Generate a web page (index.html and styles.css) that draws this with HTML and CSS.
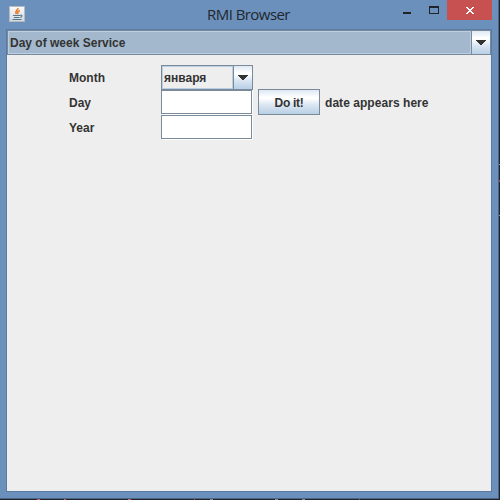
FILE: index.html
```html
<!DOCTYPE html>
<html lang="en">
<head>
<meta charset="utf-8">
<title>RMI Browser</title>
<link rel="stylesheet" href="styles.css">
</head>
<body>
<div class="desktop">
  <div class="window">
    <header class="titlebar">
      <svg class="app-icon" width="16" height="16" viewBox="0 0 16 16">
        <defs><linearGradient id="tile" x1="0" y1="0" x2="0" y2="1"><stop offset="0" stop-color="#fafafa"/><stop offset="1" stop-color="#d3d8dc"/></linearGradient></defs>
        <rect x=".5" y=".5" width="15" height="15" fill="url(#tile)" stroke="#b3bcc5"/>
        <path d="M9 2C9.5 4 5.2 4.8 7.4 8.2M10.8 4.5C8.2 5.7 8.3 6.6 9.3 8.2" fill="none" stroke="#e87a26" stroke-width="1.5"/>
        <path d="M4 9.5h7M5 11.5h5.5M3.5 13.5h9M11 9.3c2.8-.6 2.5 1.8.2 2.2" fill="none" stroke="#4f7890" stroke-width="1.1"/>
      </svg>
      <h1 class="title">RMI Browser</h1>
      <div class="controls">
        <svg width="52" height="20" viewBox="0 0 52 20">
          <path d="M8 12h8v2H8z" fill="#202429"/>
          <path d="M34 6h10v8H34zM35 8v5h8V8z" fill="#202429" fill-rule="evenodd"/>
        </svg>
        <svg class="close" width="45" height="20" viewBox="0 0 45 20" shape-rendering="crispEdges">
          <path d="M19 7h2v1h1v1h2V8h1V7h2v1h-1v1h-1v1h-1v1h1v1h1v1h1v1h-2v-1h-1v-1h-2v1h-1v1h-2v-1h1v-1h1v-1h1v-1h-1V9h-1V8h-1z" fill="#fff"/>
        </svg>
      </div>
    </header>
    <main class="client">
      <div class="combo service">
        <div class="value">Day of week Service</div>
        <div class="arrow"><svg width="10" height="5" viewBox="0 0 10 5"><path d="M0 0h10v1H9v1H8v1H7v1H6v1H4V4H3V3H2V2H1V1H0z" fill="#333"/></svg></div>
      </div>
      <div class="form">
        <label class="month-label">Month</label>
        <div class="combo month">
          <div class="value">января</div>
          <div class="arrow"><svg width="10" height="5" viewBox="0 0 10 5"><path d="M0 0h10v1H9v1H8v1H7v1H6v1H4V4H3V3H2V2H1V1H0z" fill="#333"/></svg></div>
        </div>
        <label class="day-label">Day</label>
        <div class="field day"></div>
        <div class="action"><button>Do it!</button><span>date appears here</span></div>
        <label class="year-label">Year</label>
        <div class="field year"></div>
      </div>
    </main>
  </div>
</div>
</body>
</html>
```
FILE: styles.css
```css
* { box-sizing: border-box; }
body { margin: 0; font: bold 12px/16px "Liberation Sans", Arial, sans-serif; color: #333; }
.desktop {
  width: 500px; height: 500px; overflow: hidden;
  background:
    linear-gradient(#c45b60, #c45b60) 37px 499px / 3px 1px no-repeat,
    linear-gradient(#c45b60, #c45b60) 64px 499px / 2px 1px no-repeat,
    linear-gradient(#c45b60, #c45b60) 128px 499px / 3px 1px no-repeat,
    linear-gradient(#a04a50, #a04a50) 194px 499px / 1px 1px no-repeat,
    linear-gradient(#85888e, #85888e) 210px 499px / 3px 1px no-repeat,
    linear-gradient(#85888e, #85888e) 275px 499px / 3px 1px no-repeat,
    linear-gradient(#85888e, #85888e) 302px 499px / 3px 1px no-repeat,
    linear-gradient(#7a5c60, #7a5c60) 359px 499px / 1px 1px no-repeat,
    linear-gradient(#6fa0c4, #6fa0c4) 499px 164px / 1px 1px no-repeat,
    linear-gradient(#a04a50, #a04a50) 499px 180px / 1px 2px no-repeat,
    linear-gradient(#6fa0c4, #6fa0c4) 499px 215px / 1px 1px no-repeat,
    #20232d;
}
.window {
  width: 499px; height: 499px; padding: 0 6px 6px;
  background: #6b90bc; border-right: 1px solid #4b6585; border-bottom: 1px solid #4b6585;
}
.titlebar { height: 29px; display: grid; grid-template-columns: 195px 1fr 97px; align-items: start; }
.app-icon { margin: 6px 0 0 3px; }
.title {
  margin: 4px 0 0 6px; font: 400 15px/20px "Open Sans", "Noto Sans", sans-serif;
  letter-spacing: -.55px; color: #22272e; white-space: nowrap;
}
.controls { display: flex; }
.close { background: #c75050; }
.client { width: 486px; height: 463px; border: 1px solid #597ba3; background: #eee; }
.combo { display: flex; height: 25px; border: 1px solid #7a8a99; }
.combo .value { flex: 1; border: 1px solid #b8cfe5; padding: 3px 1px; }
.arrow, button {
  background: linear-gradient(#dde8f3 0%, #fff 30%, #fff 35%, #dde8f3 60%, #b8cfe5 100%);
}
.arrow { width: 19px; border-left: 1px solid #7a8a99; display: flex; align-items: center; justify-content: center; }
.service .value { background: #a3b8cc; }
.form {
  display: grid; grid-template-columns: 92px 92px 1fr; grid-template-rows: 25px 25px 25px;
  padding: 10px 0 0 62px;
}
.form label { padding-top: 5px; grid-column: 1; }
.month, .field { grid-column: 2; }
.field {
  height: 24px; width: 91px; background: #fff; border: 1px solid #7a8a99;
  box-shadow: 1px 1px 0 #fff;
}
.action { display: flex; margin: -1px 0 0 5px; height: 26px; align-items: center; }
button {
  width: 62px; height: 26px; padding: 2px 0 0; border: 1px solid #7a8a99;
  font: inherit; letter-spacing: -.3px; color: inherit;
}
.action span { margin: 2px 0 0 5px; letter-spacing: .05px; }
```
